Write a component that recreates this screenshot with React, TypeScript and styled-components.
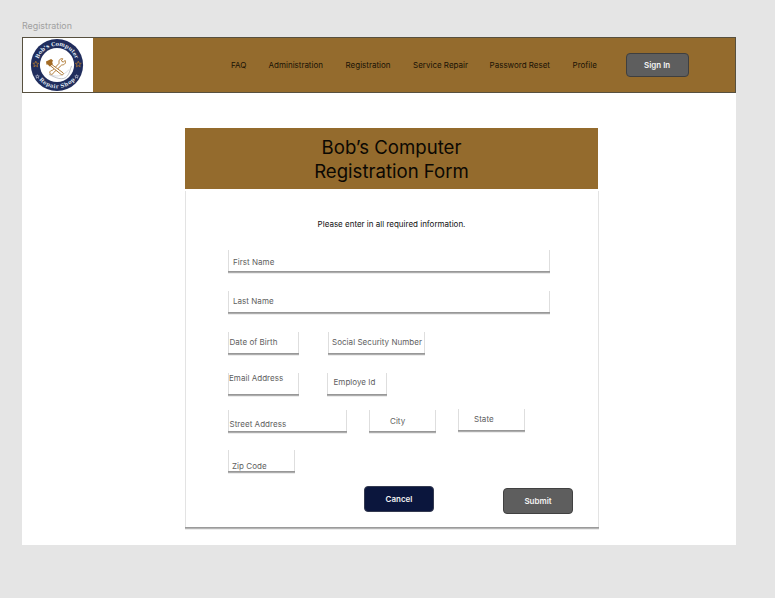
import React from "react";
import styled, { createGlobalStyle } from "styled-components";

const GlobalStyle = createGlobalStyle`
  * { box-sizing: border-box; }
  body {
    margin: 0;
    background: #e5e5e5;
    font-family: Inter, "Liberation Sans", sans-serif;
    font-size: 8px;
    line-height: 10px;
    color: #111;
  }
`;

const Canvas = styled.div`
  width: 775px;
  height: 598px;
  padding: 20px 0 0 22px;
  overflow: hidden;
  background: #e5e5e5;
`;

const FrameLabel = styled.div`
  height: 17px;
  font-size: 8.9px;
  line-height: 12px;
  color: #a0a0a0;
`;

const Artboard = styled.main`
  width: 713.5px;
  height: 507.5px;
  background: #fff;
`;

const Header = styled.header`
  display: flex;
  height: 56px;
  border: 1px solid #57503f;
  background: #946b2d;
`;

const LogoCell = styled.div`
  display: flex;
  width: 70px;
  height: 54px;
  padding-left: 7px;
  background: #fff;
  svg { display: block; overflow: visible; }
`;

const Nav = styled.nav`
  display: grid;
  grid-template-columns: 37.6px 77px 67.5px 76.5px 83px 53px;
  height: 30px;
  margin: 22px 0 0 138px;
`;

const NavLink = styled.a<{ $raise?: number }>`
  color: #191205;
  white-space: nowrap;
  letter-spacing: -0.01px;
  margin-top: ${(p) => -(p.$raise ?? 0)}px;
`;

const Button = styled.button<{ $w: number; $h: number; $bg: string; $edge: string }>`
  width: ${(p) => p.$w}px;
  height: ${(p) => p.$h}px;
  padding: 0;
  border: 1px solid ${(p) => p.$edge};
  border-radius: 4px;
  background: ${(p) => p.$bg};
  color: #f2f2f2;
  font: 600 8px/10px Inter, "Liberation Sans", sans-serif;
`;

const SignIn = styled(Button)`
  margin: 15px 0 0 0;
`;

const FormPanel = styled.section`
  width: 413px;
  margin: 35px 0 0 163px;
`;

const Banner = styled.h1`
  height: 61px;
  margin: 0;
  padding-top: 8px;
  background: #946b2d;
  color: #0b0803;
  font-size: 18.6px;
  font-weight: 400;
  line-height: 23.5px;
  text-align: center;
`;

const Card = styled.form`
  width: 414px;
  height: 336px;
  margin-top: 2px;
  padding: 28px 0 0 42px;
  border: solid #e3e3e3;
  border-width: 0 1px;
  box-shadow: 0 1px 0 #9b9b9b, 0 2px 0 #b5b5b5, 0 3px 0 #ececec;
`;

const Intro = styled.p`
  height: 31px;
  margin: 0 43px 0 0;
  text-align: center;
`;

const Row = styled.div<{ $gap?: number; $h: number }>`
  display: flex;
  align-items: flex-start;
  gap: ${(p) => p.$gap ?? 0}px;
  height: ${(p) => p.$h}px;
`;

const Field = styled.label<{ $w: number; $x: number; $y: number; $lift?: number }>`
  width: ${(p) => p.$w}px;
  height: 21px;
  margin-top: ${(p) => -(p.$lift ?? 0)}px;
  padding: ${(p) => p.$y}px 0 0 ${(p) => p.$x}px;
  border: solid #dedede;
  border-width: 0 1px;
  box-shadow: 0 1px 0 #989898, 0 2px 0 #adadad, 0 3px 0 #ededed;
  color: #5e5e5e;
  letter-spacing: 0.04px;
  white-space: nowrap;
`;

const Actions = styled.div`
  display: flex;
  gap: 69px;
  margin: 0 0 0 136px;
`;

const SubmitButton = styled(Button)`
  margin-top: 2px;
`;

const STAR =
  "M0-2.8 .75-.9 2.7-.8 1.2.45 1.7 2.4 0 1.3-1.7 2.4-1.2.45-2.7-.8-.75-.9Z";

function Logo() {
  return (
    <svg width="54" height="54" viewBox="-27 -27 54 54" role="img" aria-label="Bob's Computer Repair Shop">
      <defs>
        <path id="top-arc" d="M-19.3 0A19.3 19.3 0 0 1 19.3 0" />
        <path id="bottom-arc" d="M-23.2 0A23.2 23.2 0 0 0 23.2 0" />
      </defs>
      <circle r="26.1" fill="#202d5d" />
      <circle r="17.1" fill="#fff" />
      <g fill="#dfe3ee" fontFamily="'DejaVu Serif', serif" fontWeight="700" fontSize="5.4" textAnchor="middle">
        <text><textPath href="#top-arc" startOffset="50%" textLength="48">Bob's Computer</textPath></text>
        <text><textPath href="#bottom-arc" startOffset="50%" textLength="41">Repair Shop</textPath></text>
      </g>
      <g fill="none" strokeWidth=".8">
        <path d={STAR} transform="translate(-21.2 -.8) scale(1.1)" stroke="#a06f35" />
        <path d={STAR} transform="translate(21.3 -.8) scale(1.1)" stroke="#a06f35" />
        <path d={STAR} transform="translate(-19.6 11.6) scale(.68)" stroke="#dfe3ee" />
        <path d={STAR} transform="translate(19.6 11.6) scale(.68)" stroke="#dfe3ee" />
      </g>
      <path d="M-8 9.4C-2 12.4 6 16.7 10.5 10.8 12.7 7.8 13.2 4 14.6.9" fill="none" stroke="#8e929c" strokeWidth=".55" />
      <path d="M-8 9.4C-1 11.5 4 13 12.2 4.5" fill="none" stroke="#b5b8be" strokeWidth=".45" />
      <g fill="#fff" stroke="#b17b36" strokeWidth="1" strokeLinejoin="round">
        <path d="M2.2-1.8C1.3-4.5 3-6.8 5.7-6.3L4.4-4.1 6.3-2.8 8-4.6C9.4-2.2 7.5.2 4.8-.1L-3.8 8.1C-4.4 10-7.3 9.8-7.2 7.4-7.1 6-5.8 5.3-4.8 5.6Z" />
        <path d="M-5.8-.9 6 7.8C7.2 8.8 5.5 10.5 4.2 9.5L-6.9.5Z" />
      </g>
      <path d="M-11-3.5-5.9-6-4-4.4-4.8-2.8-4.1-.8-7.4 1.6-9.2-.5-10.5-.2Z" fill="#a36b24" />
    </svg>
  );
}

export default function App() {
  return (
    <>
      <GlobalStyle />
      <Canvas>
        <FrameLabel>Registration</FrameLabel>
        <Artboard>
          <Header>
            <LogoCell><Logo /></LogoCell>
            <Nav>
              <NavLink $raise={0.5}>FAQ</NavLink>
              <NavLink>Administration</NavLink>
              <NavLink>Registration</NavLink>
              <NavLink>Service Repair</NavLink>
              <NavLink>Password Reset</NavLink>
              <NavLink $raise={0.5}>Profile</NavLink>
            </Nav>
            <SignIn $w={63} $h={24} $bg="#5e5e5e" $edge="#3f3f3f">Sign In</SignIn>
          </Header>
          <FormPanel>
            <Banner>Bob’s Computer<br />Registration Form</Banner>
            <Card>
              <Intro>Please enter in all required information.</Intro>
              <Row $h={41}><Field $w={322} $x={4} $y={7}>First Name</Field></Row>
              <Row $h={41}><Field $w={322} $x={4} $y={5}>Last Name</Field></Row>
              <Row $h={41} $gap={29}>
                <Field $w={71} $x={0.5} $y={5}>Date of Birth</Field>
                <Field $w={97} $x={3} $y={5}>Social Security Number</Field>
              </Row>
              <Row $h={37} $gap={28}>
                <Field $w={71} $x={-0.5} $y={7}>Email Address</Field>
                <Field $w={60} $x={5.5} $y={4}>Employe Id</Field>
              </Row>
              <Row $h={40} $gap={22}>
                <Field $w={119} $x={0.5} $y={9}>Street Address</Field>
                <Field $w={67} $x={20} $y={6}>City</Field>
                <Field $w={67} $x={15} $y={5} $lift={1.5}>State</Field>
              </Row>
              <Row $h={36}><Field $w={67} $x={3} $y={11}>Zip Code</Field></Row>
              <Actions>
                <Button type="button" $w={70} $h={26} $bg="#0b163d" $edge="#343a50">Cancel</Button>
                <SubmitButton type="button" $w={70} $h={26} $bg="#5e5e5e" $edge="#414141">Submit</SubmitButton>
              </Actions>
            </Card>
          </FormPanel>
        </Artboard>
      </Canvas>
    </>
  );
}
